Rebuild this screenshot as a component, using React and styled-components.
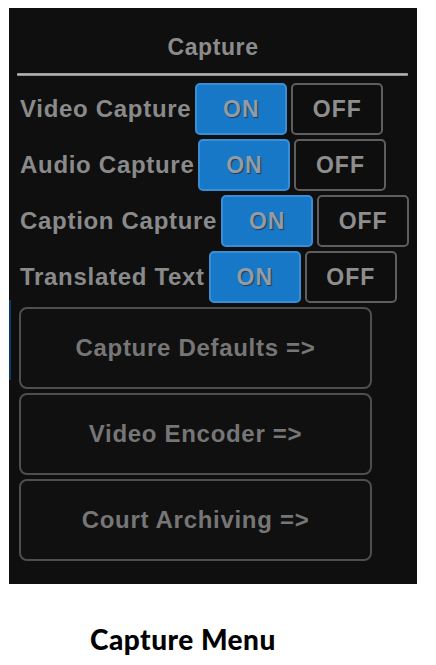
import React from 'react';
import styled, { createGlobalStyle } from 'styled-components';

const GlobalStyle = createGlobalStyle`
  html, body {
    margin: 0;
    padding: 0;
    background: #ffffff;
  }
`;

const Page = styled.div`
  padding: 8px 0 0 9px;
  width: 436px;
  height: 665px;
  box-sizing: border-box;
`;

const Panel = styled.div`
  position: relative;
  width: 408px;
  height: 576px;
  box-sizing: border-box;
  background: #0f0f0f;
  font-family: "Liberation Sans", Arial, sans-serif;
  font-weight: bold;
  color: #8a8a8a;
`;

const EdgeMark = styled.div`
  position: absolute;
  left: 0;
  top: 292px;
  width: 2px;
  height: 80px;
  background: #0c3a66;
`;

const Header = styled.div`
  height: 65px;
  display: flex;
  align-items: center;
  justify-content: center;
  padding-top: 13px;
  box-sizing: border-box;
  font-size: 23px;
  letter-spacing: 0.6px;
  color: #8c8c8c;
`;

const Rule = styled.div`
  height: 3px;
  margin: 0 9px 0 8px;
  background: linear-gradient(to bottom, #8e8e8e, #b4b4b4, #7a7a7a);
  border-radius: 1px;
`;

const Rows = styled.div`
  display: flex;
  flex-direction: column;
  gap: 4px;
  padding: 7px 0 0 11px;
`;

const Row = styled.div`
  display: flex;
  align-items: center;
  height: 52px;
`;

const Label = styled.div`
  font-size: 24px;
  letter-spacing: 0.7px;
  margin-right: 4px;
  white-space: nowrap;
  color: #8a8a8a;
`;

const Toggle = styled.div`
  width: 92px;
  height: 52px;
  box-sizing: border-box;
  display: flex;
  align-items: center;
  justify-content: center;
  border-radius: 5px;
  font-size: 23px;
  letter-spacing: 1px;
  margin-right: ${p => (p.$on ? '4px' : '0')};
  background: ${p => (p.$on ? '#1878c8' : '#0e0e0e')};
  border: 2px solid ${p => (p.$on ? '#3a8ed6' : '#5e5e5e')};
  color: ${p => (p.$on ? '#8e9cab' : '#8e8e8e')};
  text-shadow: ${p => (p.$on ? '1px 1px 1px #2a3a4a' : 'none')};
`;

const Menu = styled.div`
  display: flex;
  flex-direction: column;
  gap: 4px;
  padding: 4px 0 0 10px;
`;

const MenuButton = styled.div`
  width: 353px;
  height: 82px;
  box-sizing: border-box;
  display: flex;
  align-items: center;
  justify-content: center;
  border: 2px solid #4e4e4e;
  border-radius: 8px;
  background: #101010;
  font-size: 24px;
  letter-spacing: 0.7px;
  color: #767676;
`;

const Caption = styled.div`
  padding: 38px 0 0 81px;
  font-family: Lato, "Liberation Sans", sans-serif;
  font-weight: 900;
  font-size: 28px;
  letter-spacing: 0.5px;
  color: #000000;
`;

const toggles = ['Video Capture', 'Audio Capture', 'Caption Capture', 'Translated Text'];
const menus = ['Capture Defaults =>', 'Video Encoder =>', 'Court Archiving =>'];

export default function App() {
  return (
    <>
      <GlobalStyle />
      <Page>
        <Panel>
          <EdgeMark />
          <Header>Capture</Header>
          <Rule />
          <Rows>
            {toggles.map(t => (
              <Row key={t}>
                <Label>{t}</Label>
                <Toggle $on>ON</Toggle>
                <Toggle>OFF</Toggle>
              </Row>
            ))}
          </Rows>
          <Menu>
            {menus.map(m => (
              <MenuButton key={m}>{m}</MenuButton>
            ))}
          </Menu>
        </Panel>
        <Caption>Capture Menu</Caption>
      </Page>
    </>
  );
}
